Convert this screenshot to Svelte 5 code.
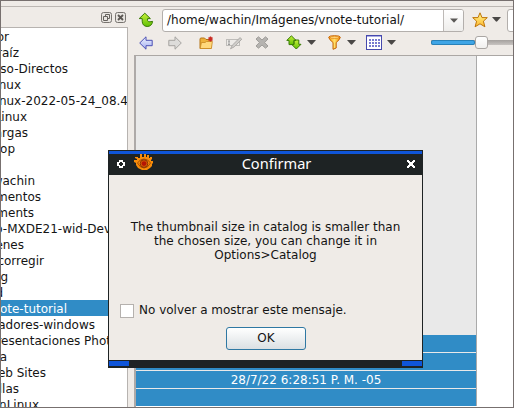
<script>
  const folders = [
    { name: 'or', end: 9 },
    { name: 'raíz', end: 19 },
    { name: 'so-Directos', end: 68 },
    { name: 'inux', end: 21 },
    { name: 'inux-2022-05-24_08.4', end: 128 },
    { name: 'Linux', end: 27 },
    { name: 'argas', end: 28 },
    { name: 'top', end: 15 },
    { name: '', end: 0 },
    { name: 'wachin', end: 35 },
    { name: 'mentos', end: 41 },
    { name: 'ments', end: 34 },
    { name: 'o-MXDE21-wid-Dev', end: 111 },
    { name: 'enes', end: 24 },
    { name: 'corregir', end: 44 },
    { name: 'g', end: 8 },
    { name: 'd', end: 3 },
    { name: 'note-tutorial', end: 67, selected: true },
    { name: 'adores-windows', end: 95 },
    { name: 'resentaciones Phot', end: 111 },
    { name: 'a', end: 7 },
    { name: 'eb Sites', end: 46 },
    { name: 'llas', end: 19 },
    { name: 'onLinux', end: 39 },
  ];
  const bands = ['', '', '28/7/22 6:28:51 P. M. -05', ''];
</script>

{#snippet caret()}
  <svg class="caret" width="9" height="5" viewBox="0 0 9 5"><path d="M0 0H9L5.3 4.3Q4.5 5 3.7 4.3Z" fill="#4a4846" /></svg>
{/snippet}

<div class="window">
  <div class="strip"></div>
  <div class="body">
    <aside>
      <div class="dock">
        <svg width="11" height="11" viewBox="0 0 11 11">
          <rect x=".5" y=".5" width="10" height="10" rx="2" fill="#e8e5e1" stroke="#77736f" />
          <path d="M4.5 5V2.5H8.5V6.5H7M2.5 4.5H6.5V8.5H2.5Z" fill="none" stroke="#67635f" />
        </svg>
        <svg width="11" height="11" viewBox="0 0 11 11">
          <rect x=".5" y=".5" width="10" height="10" rx="2" fill="#e8e5e1" stroke="#77736f" />
          <path d="M3 3L8 8M8 3L3 8" stroke="#5b5753" stroke-width="1.8" />
        </svg>
      </div>
      <div class="tree">
        {#each folders as f}
          <div class="row" class:selected={f.selected}>
            <span style="width:{f.end}px">{f.name}</span>
          </div>
        {/each}
      </div>
    </aside>

    <main>
      <div class="address">
        <svg class="up" width="16" height="16" viewBox="0 0 16 16">
          <defs><linearGradient id="lime" x1="0" y1="0" x2="0" y2="1"><stop offset="0" stop-color="#c8f03a" /><stop offset="1" stop-color="#5fc003" /></linearGradient></defs>
          <path d="M6.8 1.2L12.4 6.6H9.6V8.6Q10.2 10.2 12 9.8L14.6 9.4Q13.8 14.4 9.2 14.5Q4.3 14.2 4.2 9.2V6.6H1.2Z" fill="url(#lime)" stroke="#387a05" stroke-linejoin="round" />
        </svg>
        <div class="path">
          <span>/home/wachin/Imágenes/vnote-tutorial/</span>
          <div class="drop"><svg width="8" height="5" viewBox="0 0 8 5"><path d="M0 .5H8L4 4.8Z" fill="#5a5856" /></svg></div>
        </div>
        <svg class="star" width="16" height="16" viewBox="0 0 16 16">
          <defs><linearGradient id="gold" x1="0" y1="0" x2="0" y2="1"><stop offset="0" stop-color="#fff58c" /><stop offset="1" stop-color="#ffb930" /></linearGradient></defs>
          <path d="M8 .8L10 5.6H15.3L11.4 9.2L12.9 14.8L8 11.8L3.1 14.8L4.6 9.2L.7 5.6H6Z" fill="url(#gold)" stroke="#bd7408" stroke-linejoin="round" />
        </svg>
        {@render caret()}
        <div class="filter"></div>
      </div>

      <div class="tools">
        <svg width="14" height="14" viewBox="0 0 14 14"><defs><linearGradient id="blue" x1="0" y1="0" x2="0" y2="1"><stop offset="0" stop-color="#f0f4ff" /><stop offset="1" stop-color="#a2adf0" /></linearGradient></defs><path d="M.7 7L7 .8V4.3H13.2V9.7H7V13.2Z" fill="url(#blue)" stroke="#4c50b5" stroke-linejoin="round" /></svg>
        <svg style="margin-left:15px" width="14" height="14" viewBox="0 0 14 14"><path d="M13.3 7L7 .8V4.3H.8V9.7H7V13.2Z" fill="#dddcda" stroke="#a5a3a0" stroke-linejoin="round" /></svg>
        <svg style="margin-left:17px" width="16" height="14" viewBox="0 0 16 14"><path d="M1 12.5V3.2Q1 2 2 2H5.5L7 3.5H12V12.5Z" fill="#edb33d" stroke="#b57517" /><path d="M1.2 12.5L2.4 6.5H6L7.5 5.5H13.4L12.4 12.5Z" fill="#ffd97c" stroke="#c98a22" stroke-width=".8" /><path d="M11.5 .5V5.5M9 3H14M9.7 1.2L13.3 4.8M13.3 1.2L9.7 4.8" stroke="#c92a22" stroke-width="1.1" /></svg>
        <svg style="margin-left:11px" width="17" height="14" viewBox="0 0 17 14"><rect x=".5" y="3.5" width="13" height="6" fill="#edebe8" stroke="#bebcb9" /><path d="M2 5H4M3 5V9M2 8.5H4" stroke="#999" fill="none" /><path d="M4.5 12.8L6.3 9.2L14 1.6L15.8 3.2L8.2 10.9Z" fill="#cfcdca" stroke="#a3a19e" stroke-width=".8" /></svg>
        <svg style="margin-left:12px" width="14" height="13" viewBox="0 0 14 13"><path d="M3.5 .8L7 4L10.5 .8L13 3L9.6 6.5L13 10L10.5 12.2L7 9L3.5 12.2L1 10L4.4 6.5L1 3Z" fill="#b5b3b0" stroke="#9f9d9a" stroke-linejoin="round" /></svg>
        <svg style="margin-left:17px" width="16" height="15" viewBox="0 0 16 15"><path d="M10.3 14L15 9.3H12.8V5H8V9.3H5.6Z" fill="url(#lime)" stroke="#387a05" stroke-linejoin="round" /><path d="M5.4 .8L10 5.4H7.8V9.6H3V5.4H.8Z" fill="url(#lime)" stroke="#387a05" stroke-linejoin="round" /></svg>
        <div class="gap">{@render caret()}</div>
        <svg style="margin-left:12px" width="13" height="15" viewBox="0 0 13 15"><defs><linearGradient id="orange" x1="0" x2="1"><stop offset="0" stop-color="#ff9f12" /><stop offset=".5" stop-color="#ffe06a" /><stop offset="1" stop-color="#f58b00" /></linearGradient></defs><path d="M.7 2.2Q1 .7 6.5 .7T12.3 2.2Q12 4.5 8.2 7.5V13L5 14.3V7.5Q1 4.5 .7 2.2Z" fill="url(#orange)" stroke="#c46205" /><ellipse cx="6.5" cy="2.4" rx="4.4" ry="1.1" fill="#ffd27a" stroke="#e08512" stroke-width=".7" /></svg>
        <div class="gap wide">{@render caret()}</div>
        <svg style="margin-left:10px" width="16" height="15" viewBox="0 0 16 15" shape-rendering="crispEdges">
          <rect x=".5" y=".5" width="15" height="14" fill="#fff" stroke="#4649ad" /><path d="M1 1.5H15" stroke="#a8aae4" />
          {#each [4, 7, 10] as y}{#each [3, 6, 9, 12] as x}<rect {x} {y} width="2" height="2" fill="#777ad0" />{/each}{/each}
        </svg>
        <div class="gap">{@render caret()}</div>
        <div class="slider"><i></i><b></b></div>
      </div>

      <div class="content">
        <div class="thumb">
          <div class="image"></div>
          {#each bands as b}
            <div class="band">{b}</div>
          {/each}
        </div>
      </div>
    </main>
  </div>

  <section class="dialog">
    <header>
      <svg class="dot" width="8" height="8" viewBox="0 0 8 8" shape-rendering="crispEdges"><path d="M2 0H6V2H8V6H6V8H2V6H0V2H2ZM3 2V3H2V5H3V6H5V5H6V3H5V2Z" fill="#fff" fill-rule="evenodd" /></svg>
      <svg class="eye" width="20" height="17" viewBox="0 0 20 17">
        <path d="M1 3H4V4H6V0H8V3H10V0H12V3H13V1H15V4H16V3H18V5L17 6V7H19V9L18 10V12L16 14L13 16H8L4 14L2 11V9L0 8V6H3V5L1 4Z" fill="#f98c08" />
        <path d="M3.5 9Q6 5 10 5T16.5 9Q14 14 10 14T3.5 9Z" fill="none" stroke="#964305" stroke-width=".9" />
        <circle cx="10" cy="9.6" r="3.8" fill="#d85c05" stroke="#7d2c05" stroke-width=".9" />
        <circle cx="10" cy="9.6" r="2.4" fill="#b51505" />
      </svg>
      <h1>Confirmar</h1>
      <svg class="close" width="8" height="8" viewBox="0 0 8 8" shape-rendering="crispEdges"><path d="M0 0H2V1H3V2H5V1H6V0H8V2H7V3H6V5H7V6H8V8H6V7H5V6H3V7H2V8H0V6H1V5H2V3H1V2H0Z" fill="#fff" /></svg>
    </header>
    <div class="panel">
      <p>The thumbnail size in catalog is smaller than<br />the chosen size, you can change it in<br />Options&gt;Catalog</p>
      <label><span class="box"></span>No volver a mostrar este mensaje.</label>
      <button>OK</button>
    </div>
    <footer><i></i><i></i></footer>
  </section>
</div>

<style>
  .window {
    position: relative;
    box-sizing: border-box;
    width: 514px;
    height: 408px;
    overflow: hidden;
    display: flex;
    flex-direction: column;
    border: 1px solid #77706f;
    background: #efebe7;
    font: 12px/16px 'DejaVu Sans', sans-serif;
    color: #141414;
  }
  svg { display: block; flex: none; }
  .strip { flex: none; height: 5px; border-bottom: 1px solid #bcb7b3; }
  .body { flex: 1; min-height: 0; display: flex; }
  aside { width: 127px; flex: none; display: flex; flex-direction: column; }
  .dock { flex: none; height: 20px; box-sizing: border-box; padding: 5px 2px 0 0; display: flex; justify-content: flex-end; gap: 3px; }
  .tree { flex: 1; min-height: 0; overflow: hidden; background: #fff; border-top: 1px solid #b7b3b0; border-right: 1px solid #b7b3b0; }
  .row { height: 16px; margin-left: -1px; display: flex; line-height: 18px; }
  .row span { flex: none; display: flex; justify-content: flex-end; white-space: nowrap; }
  .selected { background: #308cc6; color: #fff; }

  main { flex: 1; min-width: 0; margin-left: 6px; display: flex; flex-direction: column; }
  .address { flex: none; height: 25px; display: flex; align-items: center; }
  .up { margin-left: 4px; }
  .path { box-sizing: border-box; width: 302px; height: 23px; margin: 1px 0 0 8px; border: 1px solid #b3afac; border-radius: 3px; background: #fff; display: flex; line-height: 20px; overflow: hidden; flex: none; }
  .path span { flex: 1; padding-left: 4px; }
  .drop { width: 19px; border-left: 1px solid #bdb9b6; background: linear-gradient(#fff, #eeedeb); display: flex; align-items: center; justify-content: center; }
  .star { margin-left: 8px; }
  .star + :global(.caret) { margin-left: 4px; }
  .filter { flex: none; box-sizing: border-box; width: 30px; height: 23px; margin: 1px 0 0 6px; border: 1px solid #b3afac; border-radius: 3px; background: #fff; }
  .tools { flex: none; height: 23px; padding: 0 0 2px 5px; box-sizing: border-box; display: flex; align-items: center; }
  .gap { margin-left: 5px; }
  .wide { margin-left: 6px; }
  .slider { flex: none; width: 90px; height: 14px; margin-left: 35px; display: flex; align-items: center; background: linear-gradient(#a5a19e, #c8c4c1) center / 100% 5px no-repeat; }
  .slider i { box-sizing: border-box; width: 44px; height: 5px; border: 1px solid #2881b8; border-radius: 2px; background: #3fa5e6; }
  .slider b { box-sizing: border-box; width: 13px; height: 13px; border: 1px solid #aaa6a3; border-radius: 3px; background: linear-gradient(#fff, #f1f0ee); }
  .content { flex: 1; min-height: 0; background: #fff; border-top: 1px solid #aba7a4; border-left: 2px solid #aeaaa8; overflow: hidden; }
  .thumb { width: 340px; border-right: 1px solid #aaa; background: #e9e9e9; }
  .image { height: 279px; }
  .band { height: 17px; margin-bottom: 1px; background: #308cc6; color: #fff; text-align: center; line-height: 19px; }

  .dialog { position: absolute; box-sizing: border-box; left: 107px; top: 149px; width: 315px; height: 218px; border: 1px solid #1e2324; background: #efebe7; display: flex; flex-direction: column; }
  header { flex: none; box-sizing: border-box; height: 24px; padding-bottom: 1px; border-top: 3px solid #0f55d9; background: #1e2324; display: flex; align-items: center; }
  .dot { margin-left: 8px; }
  .eye { margin: -4px 0 0 9px; }
  h1 { flex: 1; margin: -3px 17px 0 0; padding-left: 9px; text-align: center; color: #fff; font: 14.6px/20px 'Noto Sans', sans-serif; }
  .close { margin-right: 7px; }
  .panel { flex: 1; display: flex; flex-direction: column; }
  p { margin: 45px 0 0; text-align: center; line-height: 14px; }
  label { display: flex; align-items: center; margin: 40px 0 0 11px; gap: 5px; line-height: 17px; }
  .box { box-sizing: border-box; width: 14px; height: 14px; border: 1px solid #b5b1ae; background: #fff; }
  button { box-sizing: border-box; width: 80px; height: 23px; margin: 8px 0 0 117px; padding: 0; border: 1px solid #2f78a3; border-radius: 3px; background: linear-gradient(#fff, #dbe0e3); color: #141414; font: 12px/21px 'DejaVu Sans', sans-serif; }
  footer { flex: none; height: 6px; border-top: 1px solid #1e2324; background: #1e2324; display: flex; justify-content: space-between; }
  footer i { width: 20px; height: 5px; background: #0f55d9; }
</style>
